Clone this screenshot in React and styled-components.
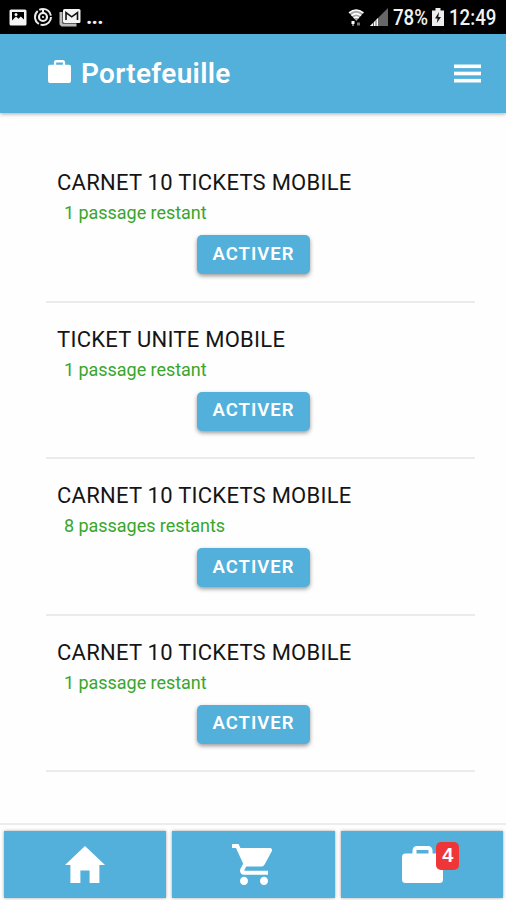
import React from "react";
import styled, { createGlobalStyle } from "styled-components";

const tickets = [
  { title: "CARNET 10 TICKETS MOBILE", left: "1 passage restant" },
  { title: "TICKET UNITE MOBILE", left: "1 passage restant" },
  { title: "CARNET 10 TICKETS MOBILE", left: "8 passages restants" },
  { title: "CARNET 10 TICKETS MOBILE", left: "1 passage restant" },
];

const PictureIcon = () => (
  <svg width="18" height="17" viewBox="0 0 18 17">
    <rect x="0.5" y="0.5" width="17" height="16" rx="1.5" fill="#f4f4f4" />
    <path d="M3 3h12v7.5l-3.2-3-2.3 2.3L7 7.5l-4 4z" fill="#000" />
    <circle cx="7" cy="5.4" r="1.5" fill="#f4f4f4" />
  </svg>
);

const SyncIcon = () => (
  <svg width="20" height="20" viewBox="0 0 20 20" fill="none" stroke="#eee">
    <circle cx="10" cy="10" r="8" strokeWidth="2" strokeDasharray="15 1.75" />
    <circle cx="10" cy="10" r="4" strokeWidth="2.2" />
    <circle cx="10" cy="10" r="1.1" fill="#eee" stroke="none" />
    <path d="M10 2v4" strokeWidth="2" />
  </svg>
);

const MailIcon = () => (
  <svg width="22" height="19" viewBox="0 0 22 19">
    <path d="M0.5 4h3v11.5h14v3H2.5l-2-2z" fill="#bbb" />
    <rect x="4" y="1" width="17.5" height="14" rx="1.5" fill="#f4f4f4" />
    <path d="M7 12V4.500l5.700 4.300 5.800-4.300V12" fill="none" stroke="#111" strokeWidth="1.600" />
  </svg>
);

const WifiIcon = () => (
  <svg width="17" height="19" viewBox="0 0 17 19">
    <path d="M1 4.8Q8 -1.5 15.5 4.8L8.3 13z" fill="#aaa" />
    <path d="M1 4.8Q8 -1 15.500 4.800M3.500 7.600q4.700-4 9.500 0M5.800 10q2.500-2 5 0" fill="none" stroke="#fff" strokeWidth="1.5" />
    <path d="M3.5 13h3v3h-1v2h-1v-2h-1z" fill="#fff" />
    <path d="M9 17.500v-3h3v3z" fill="#777" />
  </svg>
);

const SignalIcon = () => (
  <svg width="18" height="18" viewBox="0 0 18 18">
    <path d="M0 18L18 0v18z" fill="#666" />
    <path d="M0 18l8-8v8z" fill="#fff" />
    <path d="M3.500 14v4M6 12v6" stroke="#222" strokeWidth="0.7" />
  </svg>
);

const BatteryIcon = () => (
  <svg width="12" height="18" viewBox="0 0 12 18">
    <path d="M3.500 0h5v2.500H12V18H0V2.500h3.500z" fill="#eee" />
    <path d="M7 4L3 10.500h2.600L4.800 15 9 9H6.300z" fill="#111" />
  </svg>
);

const BriefcaseIcon = ({ width, height }) => (
  <svg width={width} height={height} viewBox="0 0 41 37" preserveAspectRatio="none">
    <rect x="0" y="7.5" width="41" height="29.5" rx="3.5" fill="#fff" />
    <path d="M12.500 9V4.300a2.300 2.300 0 0 1 2.300-2.300h11.400a2.300 2.300 0 0 1 2.300 2.300V9" fill="none" stroke="#fff" strokeWidth="4" />
  </svg>
);

const MenuIcon = () => (
  <svg width="27" height="19" viewBox="0 0 27 19" fill="#fff">
    <rect width="27" height="3.6" y="0.5" />
    <rect width="27" height="3.6" y="7.7" />
    <rect width="27" height="3.6" y="14.9" />
  </svg>
);

const HomeIcon = () => (
  <svg width="40" height="37" viewBox="2 3 20 17" preserveAspectRatio="none" fill="#fff">
    <path d="M9.700 20v-5.700h4.600V20h4.900v-8.300H22L12 3 2 11.700h2.700V20z" />
  </svg>
);

const CartIcon = () => (
  <svg width="42" height="41" viewBox="1 2 21 20" preserveAspectRatio="none" fill="#fff">
    <path d="M7 18c-1.100 0-1.990.9-1.990 2S5.900 22 7 22s2-.9 2-2-.9-2-2-2zM1 2v2h2l3.600 7.590-1.350 2.450c-.16.28-.25.61-.25.960 0 1.100.9 2 2 2h12v-2H7.420c-.14 0-.25-.11-.25-.25l.03-.12.900-1.630h7.450c.75 0 1.410-.41 1.750-1.030l3.580-6.490A1.003 1.003 0 0 0 20 4H5.210l-.94-2H1zm16 16c-1.100 0-1.990.9-1.990 2s.89 2 1.990 2 2-.9 2-2-.9-2-2-2z" />
  </svg>
);

const App = () => {
  return (
    <>
      <GlobalStyle />
      <Screen>
        <StatusBar>
          <StatusLeft>
            <PictureIcon />
            <SyncIcon />
            <MailIcon />
            <Dots>...</Dots>
          </StatusLeft>
          <StatusRight>
            <WifiIcon />
            <SignalIcon />
            <StatusText width={34}>78%</StatusText>
            <BatteryIcon />
            <StatusText width={48}>12:49</StatusText>
          </StatusRight>
        </StatusBar>
        <Header>
          <BriefcaseIcon width={23} height={23} />
          <PageTitle>Portefeuille</PageTitle>
          <MenuButton>
            <MenuIcon />
          </MenuButton>
        </Header>
        <TicketList>
          {tickets.map((ticket, index) => {
            return (
              <TicketItem key={index}>
                <TicketTitle>{ticket.title}</TicketTitle>
                <TicketLeft>{ticket.left}</TicketLeft>
                <ActivateButton>ACTIVER</ActivateButton>
              </TicketItem>
            );
          })}
        </TicketList>
        <TabBar>
          <TabButton>
            <HomeIcon />
          </TabButton>
          <TabButton>
            <CartIcon />
          </TabButton>
          <TabButton>
            <BadgeAnchor>
              <BriefcaseIcon width={41} height={37} />
              <Badge>4</Badge>
            </BadgeAnchor>
          </TabButton>
        </TabBar>
      </Screen>
    </>
  );
};

const GlobalStyle = createGlobalStyle`
  * {
    box-sizing: border-box;
  }
  body {
    margin: 0;
    background: #fff;
    font-family: Roboto, sans-serif;
  }
  svg {
    display: block;
    flex-shrink: 0;
  }
`;

const Screen = styled.div`
  display: flex;
  flex-direction: column;
  width: 506px;
  height: 900px;
  overflow: hidden;
  background: #fefefe;
`;

const StatusBar = styled.div`
  display: flex;
  justify-content: space-between;
  align-items: center;
  height: 34px;
  flex-shrink: 0;
  padding: 0 9px;
  background: #000;
  color: #f2f2f2;
`;

const StatusLeft = styled.div`
  display: flex;
  align-items: center;
  gap: 6px;
`;

const StatusRight = styled.div`
  display: flex;
  align-items: center;
  gap: 5px;
`;

const Dots = styled.span`
  margin-left: -1px;
  font-size: 22px;
  font-weight: 700;
  line-height: 26px;
  letter-spacing: -0.8px;
`;

const StatusText = styled.span`
  width: ${(props) => props.width}px;
  font-size: 22.5px;
  font-weight: 500;
  line-height: 36px;
  white-space: nowrap;
  transform: scaleX(0.83);
  transform-origin: left;
`;

const Header = styled.header`
  display: flex;
  align-items: center;
  height: 79px;
  flex-shrink: 0;
  padding: 0 25px 4px 48px;
  background: #52b0da;
  box-shadow: 0 1px 4px rgba(60, 30, 20, 0.4);
`;

const PageTitle = styled.h1`
  margin: 5px 0 0 10px;
  color: #fff;
  font-size: 28px;
  font-weight: 600;
  line-height: 34px;
  letter-spacing: 0.3px;
`;

const MenuButton = styled.button`
  margin: 4px 0 0 auto;
  padding: 0;
  border: none;
  background: none;
`;

const TicketList = styled.main`
  flex: 1;
  padding: 33px 31px 0 46px;
`;

const TicketItem = styled.section`
  display: flex;
  flex-direction: column;
  height: 156.5px;
  padding: 23px 0 0 11px;
  border-bottom: 2px solid #ebebeb;
`;

const TicketTitle = styled.h2`
  margin: 0;
  color: #151515;
  font-size: 22px;
  font-weight: 400;
  line-height: 28px;
  letter-spacing: 0.26px;
`;

const TicketLeft = styled.p`
  margin: 4px 0 0 7px;
  color: #38a62c;
  font-size: 18px;
  line-height: 24px;
  letter-spacing: -0.04px;
`;

const ActivateButton = styled.button`
  width: 113px;
  height: 39px;
  margin: 10.4px 0 0 140px;
  padding: 0 0 2px;
  border: none;
  border-radius: 5px;
  background: #52b0da;
  box-shadow: 0 2px 4px rgba(0, 0, 0, 0.4);
  color: #fff;
  font-family: inherit;
  font-size: 18.5px;
  font-weight: 600;
  letter-spacing: 1px;
`;

const TabBar = styled.nav`
  display: grid;
  grid-template-columns: repeat(3, 1fr);
  gap: 6px;
  height: 77px;
  flex-shrink: 0;
  padding: 6px 3px 2px 4px;
  border-top: 2px solid #ececec;
`;

const TabButton = styled.button`
  display: flex;
  justify-content: center;
  align-items: center;
  padding: 0;
  border: none;
  background: #52b0da;
  box-shadow: 0 0 3px rgba(0, 0, 0, 0.35);
`;

const BadgeAnchor = styled.span`
  position: relative;
  margin-left: 2px;
`;

const Badge = styled.span`
  position: absolute;
  top: -4px;
  left: 34px;
  width: 23px;
  height: 28px;
  border-radius: 5px;
  background: #ee3639;
  color: #fff;
  font-size: 20px;
  font-weight: 700;
  line-height: 27px;
  text-align: center;
`;

export default App;
